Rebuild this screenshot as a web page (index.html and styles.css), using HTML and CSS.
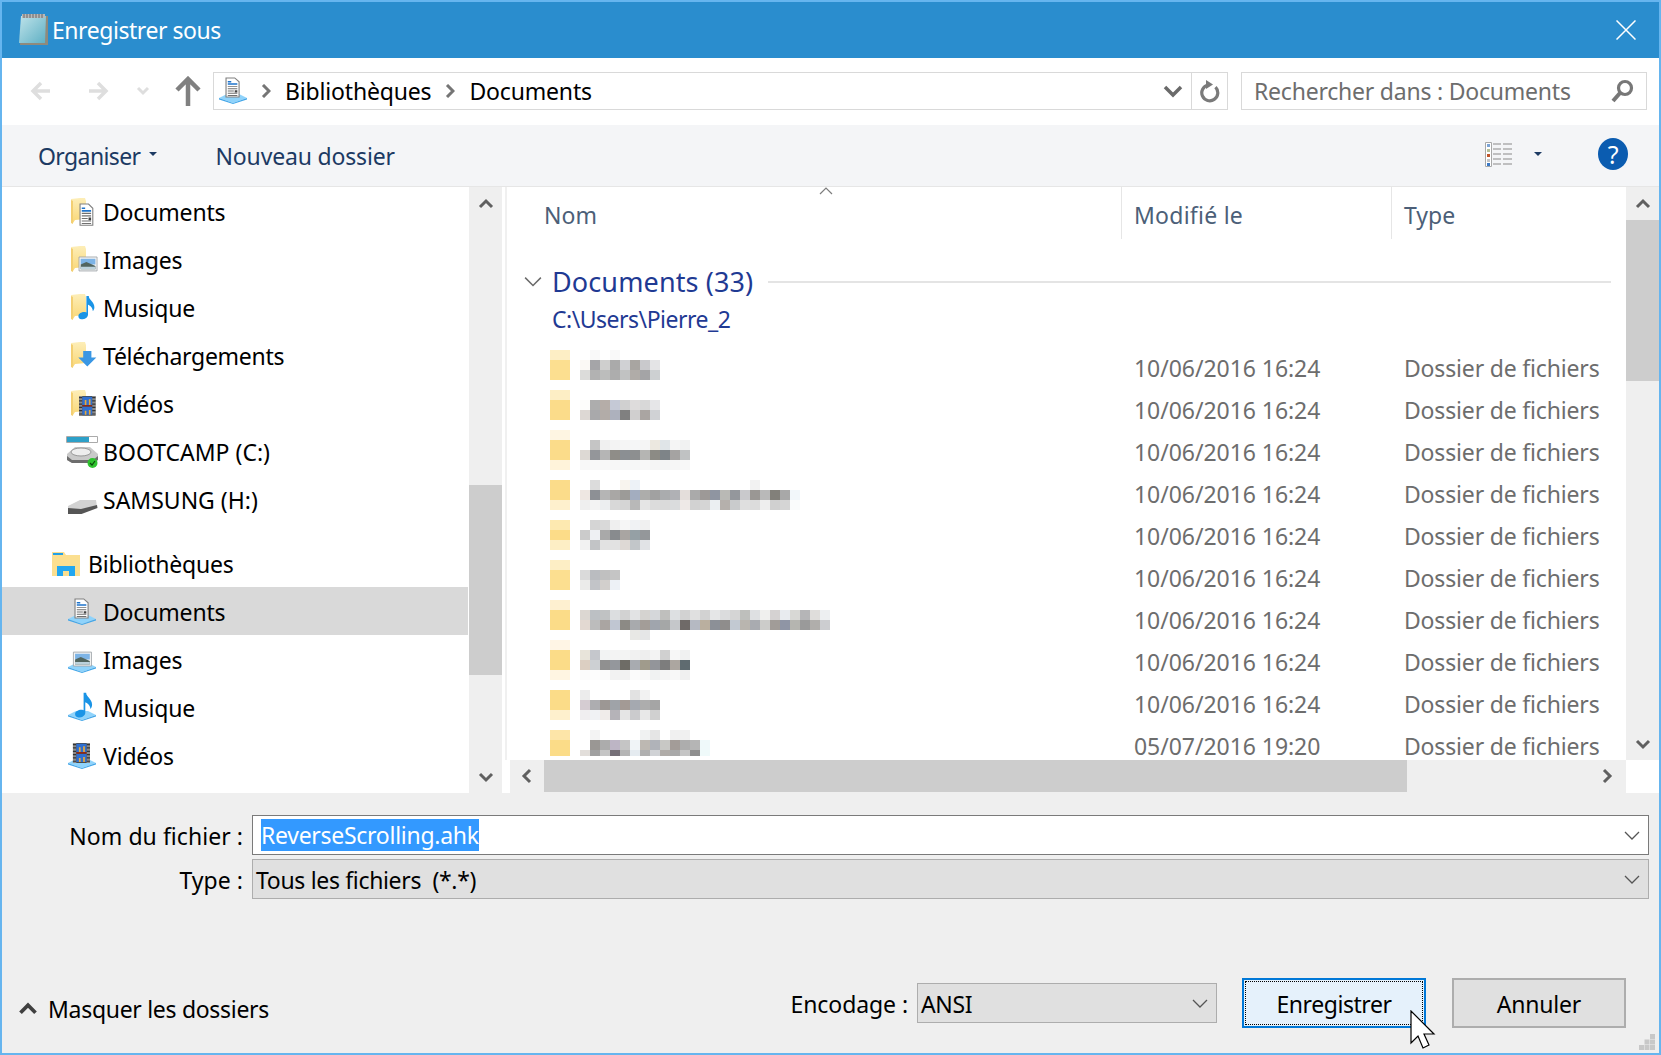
FILE: index.html
```html
<!DOCTYPE html>
<html lang="fr">
<head>
    <meta charset="UTF-8">
    <title>Enregistrer sous</title>
    <link rel="stylesheet" href="styles.css">
</head>
<body>
<svg class="defs" width="0" height="0">
    <defs>
        <linearGradient id="note-fill" x1="0" y1="0" x2="1" y2="1">
            <stop offset="0" stop-color="#bfe3ea"/>
            <stop offset="1" stop-color="#5fb0c4"/>
        </linearGradient>
        <linearGradient id="folder-fill" x1="0" y1="0" x2="0" y2="1">
            <stop offset="0" stop-color="#fdeeb8"/>
            <stop offset="1" stop-color="#f9d777"/>
        </linearGradient>
        <symbol id="i-chevron" viewBox="0 0 16 16">
            <path d="M2 11 8 5l6 6" fill="none" stroke="currentColor" stroke-width="3"/>
        </symbol>
        <symbol id="i-thin" viewBox="0 0 16 16">
            <path d="M1 5l7 7 7-7" fill="none" stroke="currentColor" stroke-width="1.3"/>
        </symbol>
        <symbol id="i-folder" viewBox="0 0 32 32">
            <path d="M5 3l9-1 5 0 1 3v18l-11 1-2 3-2-1z" fill="url(#folder-fill)"/>
            <path d="M5 4v23l2 1V5z" fill="#f3cf72"/>
        </symbol>
        <symbol id="i-plate" viewBox="0 0 32 32">
            <path d="M2 23l8-4h12l8 4-14 5z" fill="#8fd3fb"/>
            <path d="M2 23l14 5 14-5v1.500l-14 4.500-14-4.500z" fill="#43a6e8"/>
        </symbol>
        <symbol id="i-doc" viewBox="0 0 32 32">
            <path d="M9 2h10l5 5v20H9z" fill="#fff" stroke="#808080" stroke-width="1.300"/>
            <path d="M11 7h4M11 10h11" stroke="#1f74cc" stroke-width="2"/>
            <path d="M11 13h11M11 16h11M11 19h7M11 22h11M11 25h11" stroke="#707070" stroke-width="1.300"/>
            <path d="M19 18h3v3h-3z" fill="#444"/>
        </symbol>
        <symbol id="i-picture" viewBox="0 0 32 32">
            <path d="M6 5h22v17H6z" fill="#f4f4f4" stroke="#9aa0a6"/>
            <path d="M8 7h18v7H8z" fill="#7db4e6"/>
            <path d="M8 14l7-3 11 5v4H8z" fill="#51655f"/>
            <path d="M8 17h18v3H8z" fill="#bcd2dc"/>
        </symbol>
        <symbol id="i-note" viewBox="0 0 32 32">
            <path d="M16 1h3c0 5 7 7 7 14 0 2-1 4-2 5 0-4-3-7-6-8v12c0 4-4 6-8 6-3 0-4-2-4-4 0-3 4-5 7-5 1 0 2 0 3 .5z" fill="#1a94e6"/>
        </symbol>
        <symbol id="i-arrow-down" viewBox="0 0 32 32">
            <path d="M10 9h10v8h6L15 28 4 17h6z" fill="#3a97e4"/>
        </symbol>
        <symbol id="i-film" viewBox="0 0 32 32">
            <path d="M7 3h20v24H7z" fill="#4a4a4a"/>
            <path d="M7 3h4v24H7zM23 3h4v24h-4z" fill="#8c8c8c"/>
            <path d="M7 5h4M7 9h4M7 13h4M7 17h4M7 21h4M7 25h4M23 5h4M23 9h4M23 13h4M23 17h4M23 21h4M23 25h4" stroke="#333" stroke-width="1.500"/>
            <path d="M11 4h12v10H11zM11 16h12v10H11z" fill="#2f6fd0"/>
            <path d="M14 8h2v6h-2zM19 7h2v7h-2zM14 21h2v5h-2zM19 20h2v6h-2z" fill="#e8a93a"/>
            <path d="M11 14h12v2H11z" fill="#8a2a1a"/>
        </symbol>
    </defs>
</svg>

<div class="window">
    <header class="titlebar">
        <svg class="title-icon" viewBox="0 0 32 34">
            <path d="M5 3h26v29H3z" fill="#8f8a7c"/>
            <path d="M4 3h25l-1 27H2z" fill="url(#note-fill)"/>
            <path d="M5 1h23v4H5z" fill="#b9b9b9"/>
            <path d="M7 1v4M10 1v4M13 1v4M16 1v4M19 1v4M22 1v4M25 1v4" stroke="#666"/>
        </svg>
        <span class="title-text">Enregistrer sous</span>
        <svg class="close-icon" viewBox="0 0 20 20"><path d="M.5.5l19 19M19.500.5l-19 19" stroke="#fff" stroke-width="1.500" fill="none"/></svg>
    </header>

    <nav class="navbar">
        <svg class="nav-btn" viewBox="0 0 24 24"><path d="M21 12H5M12 4l-8 8 8 8" fill="none" stroke="#dedede" stroke-width="3.500"/></svg>
        <svg class="nav-btn nav-forward" viewBox="0 0 24 24"><path d="M3 12h16M12 4l8 8-8 8" fill="none" stroke="#dedede" stroke-width="3.500"/></svg>
        <svg class="nav-small" viewBox="0 0 16 16"><path d="M3 5l5 5 5-5" fill="none" stroke="#dedede" stroke-width="3"/></svg>
        <svg class="nav-up" viewBox="0 0 26 30"><path d="M13 30V4M2 14 13 3l11 11" fill="none" stroke="#808080" stroke-width="4.500"/></svg>
        <div class="address">
            <svg class="address-icon" viewBox="0 0 32 32"><use href="#i-plate"/><use href="#i-doc" transform="translate(1.200 1.500) scale(.87 .76)"/></svg>
            <svg class="crumb-sep" viewBox="0 0 10 14"><path d="M2 1l6 6-6 6" fill="none" stroke="#757575" stroke-width="3"/></svg>
            <span class="crumb">Bibliothèques</span>
            <svg class="crumb-sep" viewBox="0 0 10 14"><path d="M2 1l6 6-6 6" fill="none" stroke="#757575" stroke-width="3"/></svg>
            <span class="crumb">Documents</span>
            <svg class="address-drop" viewBox="0 0 20 14"><path d="M2 3l8 8 8-8" fill="none" stroke="#6a6a6a" stroke-width="3.500"/></svg>
            <div class="refresh">
                <svg viewBox="0 0 24 24" width="24" height="24"><path d="M17.500 8.200A8 8 0 1 1 10 6" fill="none" stroke="#7a7a7a" stroke-width="3.200"/><path d="M8 1l7 4.500L8 10z" fill="#7a7a7a"/></svg>
            </div>
        </div>
        <div class="search">
            <span>Rechercher dans : Documents</span>
            <svg viewBox="0 0 24 24" width="24" height="24"><circle cx="15" cy="9" r="6.500" fill="none" stroke="#777" stroke-width="3.200"/><path d="M10 14l-7 8" stroke="#777" stroke-width="4"/></svg>
        </div>
    </nav>

    <div class="toolbar">
        <span class="tool-btn organise">Organiser</span>
        <i class="caret organise-caret"></i>
        <span class="tool-btn new-folder">Nouveau dossier</span>
        <svg class="view-icon" viewBox="0 0 28 25">
            <path d="M.5.500h6v24h-6z" fill="#fff" stroke="#a8a8a8"/>
            <path d="M2 2h3v3H2z" fill="#7ba3d4"/>
            <path d="M2 7h3v3H2z" fill="#b5c09a"/>
            <path d="M2 12h3v3H2z" fill="#c0542a"/>
            <path d="M2 17h3v3H2z" fill="#c5c5c5"/>
            <path d="M2 21h3v3H2z" fill="#3b78c4"/>
            <path d="M8 2h8M18 2h9M8 7h8M18 7h9M8 12h8M18 12h9M8 17h8M18 17h9M8 22h8M18 22h9" stroke="#8a8a8a" stroke-width="1.200"/>
        </svg>
        <i class="caret view-caret"></i>
        <span class="help">?</span>
    </div>

    <main class="main">
        <aside class="tree">
            <div class="tree-list">
                <div class="tree-item"><svg class="tree-icon" viewBox="0 0 32 32"><use href="#i-folder"/><use href="#i-doc" transform="translate(6.400 6.300) scale(.85)"/></svg>Documents</div>
                <div class="tree-item"><svg class="tree-icon" viewBox="0 0 32 32"><use href="#i-folder"/><use href="#i-picture" transform="translate(8.100 8.900) scale(.82)"/></svg>Images</div>
                <div class="tree-item"><svg class="tree-icon" viewBox="0 0 32 32"><use href="#i-folder"/><use href="#i-note" transform="translate(7.600 3.200) scale(.8)"/></svg>Musique</div>
                <div class="tree-item tight"><svg class="tree-icon" viewBox="0 0 32 32"><use href="#i-folder"/><use href="#i-arrow-down" transform="translate(9 3.600) scale(.82)"/></svg>Téléchargements</div>
                <div class="tree-item"><svg class="tree-icon" viewBox="0 0 32 32"><use href="#i-folder"/><use href="#i-film" transform="translate(7.300 5.500) scale(.82)"/></svg>Vidéos</div>
                <div class="tree-item drive">
                    <svg class="tree-icon" viewBox="0 0 32 32">
                        <path d="M.5.500h31v6H.5z" fill="#fff" stroke="#aaa"/>
                        <path d="M1 1h22v5H1z" fill="#2da0c8"/>
                        <path d="M1 18l8-7h15l8 7v6l-5 3H6l-5-3z" fill="#c9c9c9"/>
                        <ellipse cx="15" cy="16" rx="10" ry="4" fill="#eee" stroke="#999"/>
                        <path d="M1 20l5 4h21l5-4v4l-5 3H6l-5-3z" fill="#6d6d6d"/>
                        <circle cx="26.500" cy="27" r="5" fill="#2ec32e"/>
                        <path d="M24 27l2 2 3-4" fill="none" stroke="#0a4a0a" stroke-width="1.200"/>
                    </svg>BOOTCAMP (C:)</div>
                <div class="tree-item drive">
                    <svg class="tree-icon" viewBox="0 0 32 32">
                        <path d="M2 22l12-6h16l1 7-16 6-13-1z" fill="#d2d2d2"/>
                        <path d="M2 24l13 1 16-4 .5 3-16 6H2z" fill="#555"/>
                    </svg>SAMSUNG (H:)</div>
                <div class="tree-item tree-head">
                    <svg class="tree-icon head-icon" viewBox="0 0 28 24">
                        <path d="M0 0h12l2 3h14v21H0z" fill="#fbdf90"/>
                        <path d="M1 1h10v2H1z" fill="#22a0e8"/>
                        <path d="M5 24V14h18v10h-6v-5h-6v5z" fill="#22a7f0"/>
                    </svg>Bibliothèques</div>
                <div class="tree-item lib-item selected"><svg class="tree-icon" viewBox="0 0 32 32"><use href="#i-plate"/><use href="#i-doc" transform="translate(1.200 1.500) scale(.87 .76)"/></svg>Documents</div>
                <div class="tree-item lib-item"><svg class="tree-icon" viewBox="0 0 32 32"><use href="#i-plate"/><use href="#i-picture" transform="translate(2.500 4) scale(.82)"/></svg>Images</div>
                <div class="tree-item lib-item"><svg class="tree-icon" viewBox="0 0 32 32"><use href="#i-plate"/><use href="#i-note" transform="translate(4 0) scale(.85)"/></svg>Musique</div>
                <div class="tree-item lib-item"><svg class="tree-icon" viewBox="0 0 32 32"><use href="#i-plate"/><use href="#i-film" transform="translate(1 .5) scale(.85 .83)"/></svg>Vidéos</div>
            </div>
            <div class="scrollbar tree-scroll">
                <div class="scroll-btn"><svg width="16" height="16"><use href="#i-chevron"/></svg></div>
                <div class="thumb tree-thumb"></div>
                <div class="scroll-btn scroll-end"><svg class="flip" width="16" height="16"><use href="#i-chevron"/></svg></div>
            </div>
        </aside>

        <section class="pane">
            <div class="pane-top">
                <div class="list">
                    <div class="list-header">
                        <div class="col col-name">Nom</div>
                        <div class="col col-date">Modifié le</div>
                        <div class="col col-type">Type</div>
                        <svg class="sort-caret" viewBox="0 0 14 8"><path d="M1 7l6-6 6 6" fill="none" stroke="#7d7d7d" stroke-width="1.200"/></svg>
                    </div>
                    <div class="group">
                        <svg class="group-chevron" width="18" height="18"><use href="#i-thin" width="18" height="18"/></svg>
                        <span class="group-name">Documents (33)</span>
                        <span class="group-line"></span>
                    </div>
                    <div class="group-path">C:\Users\Pierre_2</div>
                    <div class="files">
                        <svg class="mosaic" viewBox="55 35 30 40.600">
                            <g>
                                <rect x="55" y="35" width="2" height="1" fill="#fdeec5"/><rect x="55" y="36" width="2" height="2" fill="#fcdf90"/>
                                <rect x="55" y="39" width="2" height="1" fill="#fdeec5"/><rect x="55" y="40" width="2" height="2" fill="#fbdc8a"/>
                                <rect x="55" y="43" width="2" height="1" fill="#fef5e2"/><rect x="55" y="44" width="2" height="2" fill="#fbdc8a"/><rect x="55" y="46" width="2" height="1" fill="#fff3da"/>
                                <rect x="55" y="48" width="2" height="2" fill="#fbdc8a"/><rect x="55" y="50" width="2" height="1" fill="#fef0cd"/>
                                <rect x="55" y="52" width="2" height="1" fill="#fde9b0"/><rect x="55" y="53" width="2" height="1" fill="#fcdc88"/><rect x="55" y="54" width="2" height="1" fill="#fdeec5"/>
                                <rect x="55" y="56" width="2" height="1" fill="#fdeec5"/><rect x="55" y="57" width="2" height="2" fill="#fcdf90"/>
                                <rect x="55" y="60" width="2" height="1" fill="#fef0d0"/><rect x="55" y="61" width="2" height="2" fill="#fbdc88"/>
                                <rect x="55" y="64" width="2" height="1" fill="#fff5e5"/><rect x="55" y="65" width="2" height="2" fill="#fbdc88"/><rect x="55" y="67" width="2" height="1" fill="#fff5e2"/>
                                <rect x="55" y="69" width="2" height="2" fill="#fbdc88"/><rect x="55" y="71" width="2" height="1" fill="#fef0cd"/>
                                <rect x="55" y="73" width="2" height="1" fill="#fde5a8"/><rect x="55" y="74" width="2" height="1.600" fill="#fbdc88"/>
                            </g>
                            <g class="cells">
                                <rect x="59" y="35" fill="#f9f9f9"/><rect x="61" y="35" fill="#f9f9f9"/>
                                <rect x="58" y="36" fill="#fbf9f5"/><rect x="59" y="36" fill="#a5a5a8"/><rect x="60" y="36" fill="#cfcfce"/><rect x="61" y="36" fill="#aaaaaa"/><rect x="62" y="36" fill="#d0d1d4"/><rect x="63" y="36" fill="#a8a5a1"/><rect x="64" y="36" fill="#c9c9cc"/><rect x="65" y="36" fill="#e4e4e6"/>
                                <rect x="58" y="37" fill="#dcdcda"/><rect x="59" y="37" fill="#b2b2b2"/><rect x="60" y="37" fill="#bcbdbc"/><rect x="61" y="37" fill="#adadad"/><rect x="62" y="37" fill="#c1c2c2"/><rect x="63" y="37" fill="#b0aca8"/><rect x="64" y="37" fill="#a4a4a6"/><rect x="65" y="37" fill="#cdd0d2"/>

                                <rect x="58" y="40" fill="#fdfdfb"/><rect x="59" y="40" fill="#adadad"/><rect x="60" y="40" fill="#b5ada8"/><rect x="61" y="40" fill="#c5c9d6"/><rect x="62" y="40" fill="#d0d0d0"/><rect x="63" y="40" fill="#dedcdc"/><rect x="64" y="40" fill="#d8d8d8"/><rect x="65" y="40" fill="#e6e6e8"/>
                                <rect x="58" y="41" fill="#ddd8d4"/><rect x="59" y="41" fill="#a9a9ab"/><rect x="60" y="41" fill="#b2aca8"/><rect x="61" y="41" fill="#adb1bd"/><rect x="62" y="41" fill="#808080"/><rect x="63" y="41" fill="#d0cfcf"/><rect x="64" y="41" fill="#aaa5a2"/><rect x="65" y="41" fill="#d0d2d5"/>

                                <rect x="59" y="44" fill="#c5c5c5"/><rect x="60" y="44" fill="#f0f0f0"/><rect x="61" y="44" fill="#f3f3f3"/><rect x="62" y="44" fill="#f5f5f5"/><rect x="63" y="44" fill="#f5f6f7"/><rect x="64" y="44" fill="#f5f5f5"/><rect x="65" y="44" fill="#ece8e0"/><rect x="66" y="44" fill="#e0e5e8"/><rect x="67" y="44" fill="#f5f5f5"/><rect x="68" y="44" fill="#f1f2f2"/>
                                <rect x="58" y="45" fill="#ddd9d4"/><rect x="59" y="45" fill="#94969a"/><rect x="60" y="45" fill="#b5b5b5"/><rect x="61" y="45" fill="#8f8d88"/><rect x="62" y="45" fill="#8b8f93"/><rect x="63" y="45" fill="#8d8f90"/><rect x="64" y="45" fill="#b5b5b3"/><rect x="65" y="45" fill="#8c8b85"/><rect x="66" y="45" fill="#7e8488"/><rect x="67" y="45" fill="#a5a3a2"/><rect x="68" y="45" fill="#c0c2c3"/>
                                <rect x="58" y="46" fill="#f8f8f8"/><rect x="59" y="46" fill="#f9f9f9"/><rect x="60" y="46" fill="#f8f8f8"/><rect x="61" y="46" fill="#f7f7f7"/><rect x="62" y="46" fill="#f7f8f8"/><rect x="63" y="46" fill="#f6f7f7"/><rect x="64" y="46" fill="#f8f8f8"/><rect x="65" y="46" fill="#f5f5f5"/><rect x="66" y="46" fill="#f4f5f5"/><rect x="67" y="46" fill="#f6f6f6"/><rect x="68" y="46" fill="#f8f8f8"/>

                                <rect x="59" y="48" fill="#dcdcdc"/><rect x="62" y="48" fill="#f8f4ee"/><rect x="63" y="48" fill="#edf2f7"/><rect x="75" y="48" fill="#f2f2f2"/>
                                <rect x="58" y="49" fill="#eee7e2"/><rect x="59" y="49" fill="#8d9095"/><rect x="60" y="49" fill="#b5b5b5"/><rect x="61" y="49" fill="#a9a7a5"/><rect x="62" y="49" fill="#9c9b98"/><rect x="63" y="49" fill="#a3adbf"/><rect x="64" y="49" fill="#adadab"/><rect x="65" y="49" fill="#a1a1a1"/><rect x="66" y="49" fill="#aaacae"/><rect x="67" y="49" fill="#b0b1b5"/><rect x="68" y="49" fill="#e4dedb"/><rect x="69" y="49" fill="#aaaaaa"/><rect x="70" y="49" fill="#9d9997"/><rect x="71" y="49" fill="#8f95a1"/><rect x="72" y="49" fill="#b9b9b5"/><rect x="73" y="49" fill="#94979c"/><rect x="74" y="49" fill="#c9c9cc"/><rect x="75" y="49" fill="#9a9794"/><rect x="76" y="49" fill="#b9b9b9"/><rect x="77" y="49" fill="#82807a"/><rect x="78" y="49" fill="#a8a8a8"/><rect x="79" y="49" fill="#f2f7fa"/>
                                <rect x="58" y="50" fill="#efefef"/><rect x="59" y="50" fill="#f3f3f3"/><rect x="60" y="50" fill="#eceef0"/><rect x="61" y="50" fill="#d8d8d8"/><rect x="62" y="50" fill="#d5d5d5"/><rect x="63" y="50" fill="#b8b8b8"/><rect x="64" y="50" fill="#e5e5e5"/><rect x="65" y="50" fill="#dcdcdc"/><rect x="66" y="50" fill="#dadada"/><rect x="67" y="50" fill="#dadcdd"/><rect x="68" y="50" fill="#eee9e7"/><rect x="69" y="50" fill="#d2d2d2"/><rect x="70" y="50" fill="#d5d5d5"/><rect x="71" y="50" fill="#ebeff2"/><rect x="72" y="50" fill="#b5b0ac"/><rect x="73" y="50" fill="#c9cbcc"/><rect x="74" y="50" fill="#dfdfdf"/><rect x="75" y="50" fill="#dcdcdc"/><rect x="76" y="50" fill="#eeeeee"/><rect x="77" y="50" fill="#d0d0d0"/><rect x="78" y="50" fill="#d5d5d5"/><rect x="79" y="50" fill="#fafcfc"/>

                                <rect x="59" y="52" fill="#d5d5d5"/><rect x="60" y="52" fill="#d9d9d9"/><rect x="61" y="52" fill="#efefef"/><rect x="62" y="52" fill="#f6f6f6"/><rect x="63" y="52" fill="#f0f2f4"/><rect x="64" y="52" fill="#f0f0f0"/>
                                <rect x="58" y="53" fill="#cbcbcb"/><rect x="59" y="53" fill="#eef0f3"/><rect x="60" y="53" fill="#a9a9a9"/><rect x="61" y="53" fill="#888b8e"/><rect x="62" y="53" fill="#a9a5a2"/><rect x="63" y="53" fill="#95a0a5"/><rect x="64" y="53" fill="#94979a"/>
                                <rect x="58" y="54" fill="#f2f2f2"/><rect x="59" y="54" fill="#c2c4c6"/><rect x="60" y="54" fill="#e2e2e2"/><rect x="61" y="54" fill="#e2e2e2"/><rect x="62" y="54" fill="#ded9d5"/><rect x="63" y="54" fill="#c2c6c9"/><rect x="64" y="54" fill="#e1e3e6"/>

                                <rect x="58" y="57" fill="#dadada"/><rect x="59" y="57" fill="#babcc0"/><rect x="60" y="57" fill="#c0c0c0"/><rect x="61" y="57" fill="#c5c5c5"/>
                                <rect x="58" y="58" fill="#ebebea"/><rect x="59" y="58" fill="#c2c4c8"/><rect x="60" y="58" fill="#d2cfcc"/><rect x="61" y="58" fill="#edf1f6"/>

                                <rect x="58" y="61" fill="#dcd7d2"/><rect x="59" y="61" fill="#bcc0c4"/><rect x="60" y="61" fill="#c0c2c3"/><rect x="61" y="61" fill="#dcdee0"/><rect x="62" y="61" fill="#d2d2d2"/><rect x="63" y="61" fill="#e2e3e4"/><rect x="64" y="61" fill="#d5d3d0"/><rect x="65" y="61" fill="#d5d7da"/><rect x="66" y="61" fill="#bfbfbd"/><rect x="67" y="61" fill="#dde0e2"/><rect x="68" y="61" fill="#d2d2d2"/><rect x="69" y="61" fill="#e0e0e0"/><rect x="70" y="61" fill="#d2d2d2"/><rect x="71" y="61" fill="#e5e6e7"/><rect x="72" y="61" fill="#dbdcdd"/><rect x="73" y="61" fill="#d5d5d5"/><rect x="74" y="61" fill="#bebfbc"/><rect x="75" y="61" fill="#dee0e2"/><rect x="76" y="61" fill="#f0f0ee"/><rect x="77" y="61" fill="#d5d2d2"/><rect x="78" y="61" fill="#e8ebef"/><rect x="79" y="61" fill="#d8d8d5"/><rect x="80" y="61" fill="#b5b5b7"/><rect x="81" y="61" fill="#dfdddb"/><rect x="82" y="61" fill="#edeff1"/>
                                <rect x="58" y="62" fill="#e3d9d2"/><rect x="59" y="62" fill="#bcbcbc"/><rect x="60" y="62" fill="#aaa5a2"/><rect x="61" y="62" fill="#c0c6d2"/><rect x="62" y="62" fill="#8c8a85"/><rect x="63" y="62" fill="#a8aaad"/><rect x="64" y="62" fill="#a39d98"/><rect x="65" y="62" fill="#a0a5ad"/><rect x="66" y="62" fill="#a5a7a7"/><rect x="67" y="62" fill="#c5c7ca"/><rect x="68" y="62" fill="#6f6a68"/><rect x="69" y="62" fill="#b5b9c2"/><rect x="70" y="62" fill="#baaf9f"/><rect x="71" y="62" fill="#8c9097"/><rect x="72" y="62" fill="#8f8d8c"/><rect x="73" y="62" fill="#c2c9d2"/><rect x="74" y="62" fill="#b9b5af"/><rect x="75" y="62" fill="#a9abb0"/><rect x="76" y="62" fill="#ccccca"/><rect x="77" y="62" fill="#a19c98"/><rect x="78" y="62" fill="#8f95a5"/><rect x="79" y="62" fill="#b5b5b0"/><rect x="80" y="62" fill="#9a9a9a"/><rect x="81" y="62" fill="#b0aeab"/><rect x="82" y="62" fill="#cccdd0"/>
                                <rect x="63" y="63" fill="#e8e8e5"/><rect x="64" y="63" fill="#e5e6e7"/>

                                <rect x="58" y="65" fill="#e8e4da"/><rect x="59" y="65" fill="#c5c7cc"/><rect x="60" y="65" fill="#f2f3f3"/><rect x="61" y="65" fill="#f3f3f3"/><rect x="62" y="65" fill="#f3f4f3"/><rect x="63" y="65" fill="#f1f1f1"/><rect x="64" y="65" fill="#eeeeee"/><rect x="65" y="65" fill="#f3f3f3"/><rect x="66" y="65" fill="#d0d0d0"/><rect x="67" y="65" fill="#f7f7f7"/><rect x="68" y="65" fill="#f0f1f1"/>
                                <rect x="58" y="66" fill="#dccfc2"/><rect x="59" y="66" fill="#cdd0d3"/><rect x="60" y="66" fill="#909090"/><rect x="61" y="66" fill="#94979c"/><rect x="62" y="66" fill="#6e6c66"/><rect x="63" y="66" fill="#a8abb0"/><rect x="64" y="66" fill="#a09b8c"/><rect x="65" y="66" fill="#93959a"/><rect x="66" y="66" fill="#7d7d7d"/><rect x="67" y="66" fill="#aca6a0"/><rect x="68" y="66" fill="#5f6b70"/>
                                <rect x="58" y="67" fill="#fbfbfb"/><rect x="59" y="67" fill="#fdfdfd"/><rect x="60" y="67" fill="#fbfbfb"/><rect x="61" y="67" fill="#f2f2f2"/><rect x="62" y="67" fill="#f2f2f2"/><rect x="63" y="67" fill="#fbfbfb"/><rect x="64" y="67" fill="#f9f9f9"/><rect x="65" y="67" fill="#f0f2f2"/><rect x="66" y="67" fill="#f5f5f5"/><rect x="67" y="67" fill="#f8f8f8"/><rect x="68" y="67" fill="#f0f0f0"/>

                                <rect x="58" y="69" fill="#ececec"/><rect x="63" y="69" fill="#e2e2e2"/><rect x="64" y="69" fill="#f2f2f2"/>
                                <rect x="58" y="70" fill="#d5ccd2"/><rect x="59" y="70" fill="#adadb0"/><rect x="60" y="70" fill="#9c9794"/><rect x="61" y="70" fill="#9fa3a8"/><rect x="62" y="70" fill="#a39a95"/><rect x="63" y="70" fill="#a5a9b0"/><rect x="64" y="70" fill="#adadad"/><rect x="65" y="70" fill="#a5a5a5"/>
                                <rect x="58" y="71" fill="#f0eef0"/><rect x="59" y="71" fill="#f0f2f4"/><rect x="60" y="71" fill="#f0ecea"/><rect x="61" y="71" fill="#b5b3b8"/><rect x="62" y="71" fill="#e5e5e5"/><rect x="63" y="71" fill="#cbcbcd"/><rect x="64" y="71" fill="#e8e8e8"/><rect x="65" y="71" fill="#d0d0d0"/>

                                <rect x="59" y="73" fill="#f3f3f3"/><rect x="64" y="73" fill="#f0f2f2"/><rect x="65" y="73" fill="#e5e5e5"/><rect x="67" y="73" fill="#f0f0f0"/><rect x="68" y="73" fill="#f0f0f0"/>
                                <rect x="59" y="74" fill="#9a9794"/><rect x="60" y="74" fill="#acacac"/><rect x="61" y="74" fill="#bdb5c5"/><rect x="62" y="74" fill="#c5c5c5"/><rect x="63" y="74" fill="#f0f4f7"/><rect x="64" y="74" fill="#bdb8b2"/><rect x="65" y="74" fill="#b0b3b9"/><rect x="66" y="74" fill="#c8c8c5"/><rect x="67" y="74" fill="#a39c98"/><rect x="68" y="74" fill="#adadad"/><rect x="69" y="74" fill="#b5b5b5"/><rect x="70" y="74" fill="#eff9fa"/>
                                <rect x="58" y="75" fill="#e2deda"/><rect x="59" y="75" fill="#a0a0a0"/><rect x="60" y="75" fill="#c5c5c5"/><rect x="61" y="75" fill="#767078"/><rect x="62" y="75" fill="#b5b5b5"/><rect x="63" y="75" fill="#e5ebf0"/><rect x="64" y="75" fill="#b0b0b0"/><rect x="65" y="75" fill="#d0d2d5"/><rect x="66" y="75" fill="#b0aca8"/><rect x="67" y="75" fill="#a9a9a9"/><rect x="68" y="75" fill="#c5c5c5"/><rect x="69" y="75" fill="#8f8f8f"/><rect x="70" y="75" fill="#effafa"/>
                            </g>
                        </svg>
                        <div class="cell-date">10/06/2016 16:24</div><div class="cell-type">Dossier de fichiers</div>
                        <div class="cell-date">10/06/2016 16:24</div><div class="cell-type">Dossier de fichiers</div>
                        <div class="cell-date">10/06/2016 16:24</div><div class="cell-type">Dossier de fichiers</div>
                        <div class="cell-date">10/06/2016 16:24</div><div class="cell-type">Dossier de fichiers</div>
                        <div class="cell-date">10/06/2016 16:24</div><div class="cell-type">Dossier de fichiers</div>
                        <div class="cell-date">10/06/2016 16:24</div><div class="cell-type">Dossier de fichiers</div>
                        <div class="cell-date">10/06/2016 16:24</div><div class="cell-type">Dossier de fichiers</div>
                        <div class="cell-date">10/06/2016 16:24</div><div class="cell-type">Dossier de fichiers</div>
                        <div class="cell-date">10/06/2016 16:24</div><div class="cell-type">Dossier de fichiers</div>
                        <div class="cell-date">05/07/2016 19:20</div><div class="cell-type">Dossier de fichiers</div>
                    </div>
                </div>
                <div class="scrollbar">
                    <div class="scroll-btn"><svg width="16" height="16"><use href="#i-chevron"/></svg></div>
                    <div class="thumb list-thumb"></div>
                    <div class="scroll-btn scroll-end"><svg class="flip" width="16" height="16"><use href="#i-chevron"/></svg></div>
                </div>
            </div>
            <div class="hscroll">
                <div class="hscroll-btn"><svg class="turn-left" width="16" height="16"><use href="#i-chevron"/></svg></div>
                <div class="thumb hscroll-thumb"></div>
                <div class="hscroll-btn hscroll-end"><svg class="turn-right" width="16" height="16"><use href="#i-chevron"/></svg></div>
                <div class="hscroll-corner"></div>
            </div>
        </section>
    </main>

    <footer class="footer">
        <div class="field">
            <label class="field-label">Nom du fichier :</label>
            <div class="combo combo-edit">
                <span class="selection">ReverseScrolling.ahk</span>
                <svg class="combo-arrow" width="16" height="16"><use href="#i-thin"/></svg>
            </div>
        </div>
        <div class="field field-type">
            <label class="field-label">Type :</label>
            <div class="combo combo-select">
                <span class="combo-value">Tous les fichiers&nbsp;&nbsp;(*.*)</span>
                <svg class="combo-arrow" width="16" height="16"><use href="#i-thin"/></svg>
            </div>
        </div>
        <div class="actions">
            <svg class="hide-chevron" width="20" height="20"><use href="#i-chevron" width="20" height="20"/></svg>
            <span class="hide-folders">Masquer les dossiers</span>
            <label class="encoding-label">Encodage :</label>
            <div class="combo combo-select encoding">
                <span class="combo-value">ANSI</span>
                <svg class="combo-arrow" width="16" height="16"><use href="#i-thin"/></svg>
            </div>
            <button class="btn btn-primary" type="button"><span class="btn-focus">Enregistrer</span></button>
            <button class="btn" type="button">Annuler</button>
        </div>
        <svg class="grip" viewBox="0 0 16 16"><path d="M11 0h5v5h-5zM5.500 5.500h5v5h-5zM11 5.500h5v5h-5zM0 11h5v5H0zM5.500 11h5v5h-5zM11 11h5v5h-5z" fill="#c8c8c8"/></svg>
        <svg class="cursor" viewBox="0 0 26 40"><path d="M1 1v32l7-7 5 12 6-3-5-11h10z" fill="#fff" stroke="#000" stroke-width="1.200"/></svg>
    </footer>
</div>
</body>
</html>
```

FILE: styles.css
```css
* {
    box-sizing: border-box;
}
html, body {
    margin: 0;
    padding: 0;
}
body {
    width: 1661px;
    height: 1055px;
    overflow: hidden;
    font-family: "Noto Sans", sans-serif;
    font-size: 23px;
    letter-spacing: -0.17px;
    color: #000;
}
.defs {
    position: absolute;
}
.window {
    width: 1661px;
    height: 1055px;
    border: 2px solid #66b5ef;
    background-color: #efefef;
    display: flex;
    flex-direction: column;
}

/* title bar */
.titlebar {
    height: 56px;
    background-color: #2a8dce;
    color: #fff;
    display: flex;
    align-items: center;
    padding: 0 24px 0 15px;
}
.title-icon {
    width: 32px;
    height: 34px;
    flex: none;
}
.title-text {
    margin-left: 3px;
    letter-spacing: -0.45px;
}
.close-icon {
    width: 20px;
    height: 20px;
    margin-left: auto;
    margin-right: -1px;
}

/* navigation row */
.navbar {
    height: 67px;
    background-color: #fff;
    display: flex;
    align-items: center;
    padding-bottom: 2px;
}
.nav-btn {
    width: 24px;
    height: 24px;
    margin-left: 27px;
}
.nav-forward {
    margin-left: 33px;
}
.nav-small {
    width: 16px;
    height: 16px;
    margin-left: 25px;
}
.nav-up {
    width: 26px;
    height: 30px;
    margin-left: 24px;
}
.address {
    width: 1015px;
    height: 38px;
    margin-left: 12px;
    border: 1px solid #d9d9d9;
    display: flex;
    align-items: center;
}
.address-icon {
    width: 32px;
    height: 32px;
    margin-left: 3px;
}
.crumb-sep {
    width: 10px;
    height: 14px;
    margin: 0 14px 0 12px;
}
.crumb + .crumb-sep {
    margin-left: 14px;
}
.address-drop {
    width: 20px;
    height: 14px;
    margin-left: auto;
    margin-right: 8px;
}
.refresh {
    width: 36px;
    height: 100%;
    border-left: 1px solid #d9d9d9;
    display: flex;
    align-items: center;
    justify-content: center;
}
.search {
    width: 406px;
    height: 38px;
    margin-left: 13px;
    border: 1px solid #d9d9d9;
    color: #6d6d6d;
    letter-spacing: -0.22px;
    display: flex;
    align-items: center;
    justify-content: space-between;
    padding: 0 12px;
}

/* command bar */
.toolbar {
    height: 62px;
    background-color: #f4f5f7;
    border-bottom: 1px solid #e6e6e6;
    color: #1c3a63;
    display: flex;
    align-items: center;
    padding-left: 36px;
}
.organise {
    letter-spacing: -0.6px;
}
.caret {
    display: block;
    width: 0;
    height: 0;
    border-left: 4px solid transparent;
    border-right: 4px solid transparent;
    border-top: 4px solid #1c3a63;
}
.organise-caret {
    margin-left: 8px;
    margin-top: -4px;
}
.new-folder {
    margin-left: 59px;
}
.view-icon {
    width: 28px;
    height: 25px;
    margin-left: auto;
    margin-top: -2px;
}
.view-caret {
    margin-left: 21px;
    margin-top: -4px;
}
.help {
    width: 30px;
    height: 32px;
    border-radius: 50%;
    background-color: #0b5cb0;
    color: #fff;
    font-size: 25px;
    line-height: 32px;
    text-align: center;
    margin-left: 56px;
    margin-right: 31px;
    margin-top: -4px;
}

/* main split */
.main {
    height: 606px;
    display: flex;
    background-color: #fff;
}
.tree {
    width: 500px;
    display: flex;
    flex: none;
}
.tree-list {
    width: 467px;
    padding-top: 1px;
}
.tree-item {
    height: 48px;
    display: flex;
    align-items: center;
    padding-left: 64px;
}
.tree-icon {
    width: 32px;
    height: 32px;
    margin-right: 5px;
    flex: none;
}
.tight {
    letter-spacing: -0.3px;
}
.drive {
    letter-spacing: 0;
}
.tree-head {
    height: 46px;
    margin-top: 17px;
    padding-left: 50px;
    letter-spacing: -0.25px;
}
.head-icon {
    width: 28px;
    height: 24px;
    margin-right: 8px;
}
.lib-item {
    padding-top: 2px;
}
.selected {
    background-color: #d9d9d9;
    margin-right: 1px;
}
.scrollbar {
    width: 33px;
    flex: none;
    background-color: #efefef;
    display: flex;
    flex-direction: column;
}
.scroll-btn {
    height: 33px;
    flex: none;
    color: #606060;
    display: flex;
    align-items: center;
    justify-content: center;
}
.scroll-end {
    margin-top: auto;
}
.flip {
    transform: rotate(180deg);
}
.turn-left {
    transform: rotate(-90deg);
}
.turn-right {
    transform: rotate(90deg);
}
.thumb {
    background-color: #cdcdcd;
}
.tree-thumb {
    height: 190px;
    margin-top: 265px;
}
.list-thumb {
    height: 161px;
}

/* file list */
.pane {
    flex: 1;
    min-width: 0;
    display: flex;
    flex-direction: column;
}
.pane-top {
    height: 573px;
    display: flex;
}
.list {
    flex: 1;
    min-width: 0;
    margin-left: 3px;
    border-left: 2px solid #f0f0f0;
}
.list-header {
    height: 52px;
    display: flex;
    position: relative;
    color: #4c5f78;
    letter-spacing: 0;
}
.col {
    padding-top: 12px;
}
.col-name {
    width: 614px;
    padding-left: 37px;
}
.col-date {
    width: 270px;
    padding-left: 12px;
    border-left: 1px solid #e6e6e6;
    letter-spacing: 0.25px;
}
.col-type {
    padding-left: 12px;
    border-left: 1px solid #e6e6e6;
}
.sort-caret {
    position: absolute;
    left: 312px;
    top: 0;
    width: 14px;
    height: 8px;
}
.group {
    height: 44px;
    margin-top: 20px;
    display: flex;
    align-items: center;
    color: #1f3a93;
}
.group-chevron {
    margin-left: 17px;
    color: #6a6a6a;
    flex: none;
}
.group-name {
    font-size: 27px;
    margin-left: 10px;
    letter-spacing: 0.12px;
}
.group-line {
    flex: 1;
    height: 2px;
    margin: 1px 15px 0 15px;
    background-color: #e4e4e4;
}
.group-path {
    height: 32px;
    line-height: 32px;
    padding-left: 45px;
    color: #1f3a93;
    letter-spacing: -0.5px;
}
.files {
    margin-top: 12px;
    display: grid;
    grid-template-columns: 614px 270px 1fr;
    grid-auto-rows: 42px;
    color: #6d6d6d;
}
.mosaic {
    grid-column: 1;
    grid-row: 1 / span 10;
    width: 300px;
    height: 406px;
    margin: 3px 0 0 43px;
    shape-rendering: crispEdges;
}
.cells rect {
    width: 1px;
    height: 1px;
}
.cell-date {
    grid-column: 2;
    padding-left: 13px;
    line-height: 42px;
    letter-spacing: -0.05px;
}
.cell-type {
    grid-column: 3;
    padding-left: 13px;
    line-height: 42px;
    white-space: nowrap;
}
.hscroll {
    height: 33px;
    margin-left: 8px;
    display: flex;
    background-color: #efefef;
    position: relative;
}
.hscroll-btn {
    width: 34px;
    height: 32px;
    color: #606060;
    display: flex;
    align-items: center;
    justify-content: center;
    flex: none;
}
.hscroll-thumb {
    width: 863px;
    height: 32px;
}
.hscroll-end {
    margin-left: auto;
    padding-right: 4px;
}
.hscroll-corner {
    width: 33px;
    background-color: #fff;
    flex: none;
}

/* bottom form */
.footer {
    flex: 1;
    min-height: 0;
    position: relative;
    display: flex;
    flex-direction: column;
    padding-top: 22px;
}
.field {
    display: flex;
    align-items: center;
    height: 40px;
}
.field-type {
    margin-top: 4px;
}
.field-label {
    width: 241px;
    text-align: right;
    letter-spacing: 0.05px;
    padding-top: 2px;
}
.combo {
    height: 40px;
    display: flex;
    align-items: center;
    position: relative;
}
.combo-edit,
.field-type .combo {
    width: 1397px;
    margin-left: 9px;
}
.combo-edit {
    background-color: #fff;
    border: 1px solid #7a7a7a;
    padding-left: 8px;
}
.selection {
    background-color: #3399ff;
    color: #fff;
    height: 32px;
    line-height: 32px;
    letter-spacing: -0.28px;
}
.combo-select {
    background-color: #e0e0e0;
    border: 1px solid #adadad;
    padding-left: 3px;
}
.combo-value {
    padding-top: 2px;
    letter-spacing: -0.33px;
}
.combo-arrow {
    position: absolute;
    right: 8px;
    top: 11px;
    color: #555;
}
.actions {
    margin-top: auto;
    margin-bottom: 25px;
    height: 50px;
    display: flex;
    align-items: center;
}
.hide-chevron {
    color: #404040;
    margin-left: 16px;
    margin-top: 12px;
    flex: none;
}
.hide-folders {
    margin-left: 10px;
    margin-top: 12px;
    letter-spacing: -0.3px;
}
.encoding-label {
    margin-left: auto;
    padding-top: 2px;
    letter-spacing: -0.08px;
}
.encoding {
    width: 300px;
    margin-left: 9px;
}
.btn {
    height: 50px;
    width: 174px;
    margin-left: 26px;
    background-color: #e0e0e0;
    border: 2px solid #adadad;
    font-family: inherit;
    font-size: inherit;
    letter-spacing: -0.2px;
    color: #000;
    padding: 2px 0 0;
}
.actions .btn:last-child {
    margin-right: 33px;
}
.btn-primary {
    width: 184px;
    margin-left: 25px;
    background-color: #e5f1fb;
    border-color: #0078d7;
    padding: 1px;
    letter-spacing: -0.45px;
}
.btn-focus {
    display: flex;
    align-items: center;
    justify-content: center;
    height: 100%;
    border: 1px dotted #000;
    padding-top: 2px;
}
.grip {
    position: absolute;
    right: 4px;
    bottom: 3px;
    width: 16px;
    height: 16px;
}
.cursor {
    position: absolute;
    left: 1408px;
    top: 217px;
    width: 26px;
    height: 40px;
}
```
